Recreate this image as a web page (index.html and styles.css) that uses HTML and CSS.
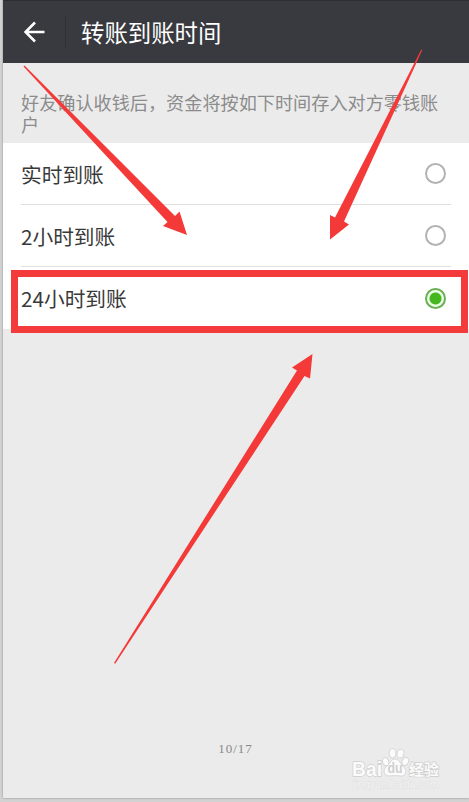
FILE: index.html
```html
<!DOCTYPE html>
<html lang="zh-CN">
	<head>
		<meta charset="UTF-8" />
		<meta name="viewport" content="width=device-width, initial-scale=1.0" />
		<title>转账到账时间</title>
		<link rel="stylesheet" href="styles.css">
	</head>
	<body>
		<div class="screen">
			<header class="top-bar">
				<svg class="back" viewBox="0 0 22 22">
					<path d="M11.5 1.5 L2 11 L11.5 20.5 M2.5 11 H21" />
				</svg>
				<h1>转账到账时间</h1>
			</header>
			<p class="note">好友确认收钱后，资金将按如下时间存入对方零钱账户</p>
			<ul class="options">
				<li class="option">
					<span>实时到账</span>
					<span class="radio"></span>
				</li>
				<li class="option">
					<span>2小时到账</span>
					<span class="radio"></span>
				</li>
				<li class="option">
					<span>24小时到账</span>
					<span class="radio checked"></span>
				</li>
			</ul>
			<footer class="page-number">10/17</footer>
		</div>

		<!-- Marks drawn over the page -->
		<div class="highlight"></div>
		<svg class="arrows" viewBox="0 0 469 802">
			<polygon points="23.5,66.5 24.5,65.5 175,216 179.5,211.5 187,235 163,226 167.5,222" />
			<polygon points="422.3,50 421.3,49.5 335,217.5 330,215 330,239.5 349,224.5 344,221.5" />
			<polygon points="115.2,663.7 114,663 297,370.5 292,367.5 312.5,354 310,378.5 304.5,376" />
		</svg>
		<svg class="watermark" viewBox="0 0 100 48">
			<text class="brand" x="1" y="28.5" textLength="30" lengthAdjust="spacingAndGlyphs">Bai</text>
			<ellipse cx="34.7" cy="14.7" rx="3.1" ry="4.2" transform="rotate(-15 34.7 14.7)" />
			<ellipse cx="41.5" cy="6.2" rx="3.4" ry="4.6" />
			<ellipse cx="49.5" cy="6.6" rx="3.4" ry="4.4" transform="rotate(12 49.5 6.6)" />
			<ellipse cx="54.3" cy="14.5" rx="3.2" ry="4.2" transform="rotate(20 54.3 14.5)" />
			<path d="M44 12 C40 12 39 16.500 35.500 19.500 C31.500 23 32.500 29 38 29 C41 28.500 46 28.500 49.500 29 C55 29.500 56.500 24 53 20.500 C49.500 17 48.500 12 44 12 Z" />
			<text class="du" x="36.5" y="26" textLength="15" lengthAdjust="spacingAndGlyphs">du</text>
			<text class="cn" x="58" y="27.5" textLength="30" lengthAdjust="spacingAndGlyphs">经验</text>
			<text class="site" x="2" y="41" textLength="86" lengthAdjust="spacingAndGlyphs">jingyan.baidu.com</text>
		</svg>
	</body>
</html>
```

FILE: styles.css
```css
* {
	box-sizing: border-box;
}
body {
	margin: 0;
	height: 802px;
	padding: 0 0 4px 3px;
	overflow: hidden;
	position: relative;
	background: #d2d2d2;
	font-family: "Noto Sans CJK SC", sans-serif;
}
.screen {
	height: 798px;
	display: flex;
	flex-direction: column;
	background: #ebebeb;
	box-shadow: 0 0 2px #888;
}
.top-bar {
	height: 63px;
	flex: none;
	display: flex;
	align-items: center;
	padding: 0 0 0 20px;
	background: #393a3f;
	border-top: 1px solid #2d2e32;
}
.back {
	width: 23px;
	height: 22px;
	fill: none;
	stroke: #fff;
	stroke-width: 2.5;
}
.top-bar h1 {
	margin: 0 0 0 19px;
	padding-left: 15px;
	border-left: 1px solid #2f3034;
	height: 33px;
	line-height: 33px;
	font-size: 23.4px;
	font-weight: 400;
	color: #fff;
}
.note {
	height: 80px;
	flex: none;
	margin: 0;
	padding: 28px 24px 0 18px;
	font-size: 18.15px;
	line-height: 22px;
	color: #8c8c8c;
}
.options {
	list-style: none;
	margin: 0;
	padding: 0 18px;
	background: #fff;
}
.option {
	height: 62px;
	display: flex;
	align-items: center;
	justify-content: space-between;
	padding-right: 5px;
	border-bottom: 1px solid #e0e0e0;
	font-size: 20.7px;
	color: #393939;
}
.option:last-child {
	border-bottom: none;
}
.radio {
	width: 21px;
	height: 21px;
	border: 2px solid #b2b2b2;
	border-radius: 50%;
}
.radio.checked {
	border-color: #6aae55;
	background: radial-gradient(circle, #45b71f 5.5px, #edffe6 6.5px);
}
.page-number {
	margin: auto 0 40px;
	padding-right: 1px;
	text-align: center;
	font-family: "Liberation Serif", serif;
	font-size: 13px;
	line-height: 18px;
	letter-spacing: 1px;
	color: #888;
}
.highlight {
	position: absolute;
	left: 11px;
	top: 270px;
	width: 457px;
	height: 63px;
	border: 7px solid #f33b3b;
}
.arrows {
	position: absolute;
	left: 0;
	top: 0;
	width: 469px;
	height: 802px;
	fill: #f43939;
}
.watermark {
	position: absolute;
	left: 351px;
	top: 747px;
	width: 100px;
	height: 48px;
	fill: #fbfbfb;
	stroke: #cecece;
	stroke-width: 0.8;
}
.watermark text {
	font-family: "Liberation Sans", "Noto Sans CJK SC", sans-serif;
	font-weight: bold;
	paint-order: stroke;
}
.watermark .brand {
	font-size: 20px;
	stroke-width: 1.4;
}
.watermark .du {
	font-size: 14px;
	fill: #d0d0d0;
	stroke: none;
}
.watermark .cn {
	font-size: 15px;
	stroke-width: 1.4;
}
.watermark .site {
	font-size: 10px;
	font-weight: normal;
	fill: #f4f4f4;
	stroke: #dedede;
	stroke-width: 0.8;
}
```
